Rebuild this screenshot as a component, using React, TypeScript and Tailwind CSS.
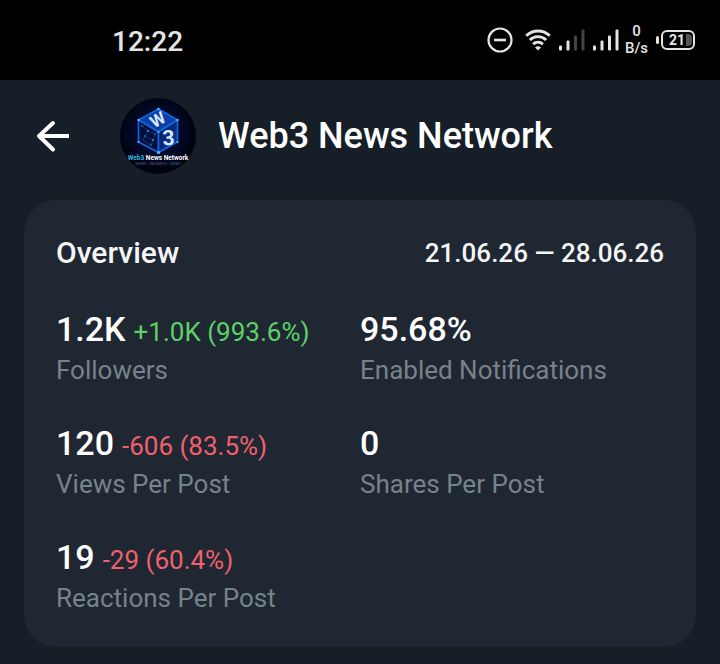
import type { ReactNode } from 'react'

type Stat = {
  label: string
  value: string
  delta?: string
  up?: boolean
}

const stats: Stat[] = [
  { label: 'Followers', value: '1.2K', delta: '+1.0K (993.6%)', up: true },
  { label: 'Enabled Notifications', value: '95.68%' },
  { label: 'Views Per Post', value: '120', delta: '-606 (83.5%)' },
  { label: 'Shares Per Post', value: '0' },
  { label: 'Reactions Per Post', value: '19', delta: '-29 (60.4%)' },
]

export default function App() {
  return (
    <div className="min-h-screen bg-[#161e27] font-['Roboto',sans-serif] text-white">
      <StatusBar />

      <header className="flex h-[120px] items-center pr-6 pb-2 pl-8">
        <button type="button" aria-label="Back" className="flex h-12 w-12 items-center">
          <BackIcon />
        </button>
        <ChannelLogo />
        <h1 className="ml-[22px] truncate text-[36px] leading-[46px] font-medium">Web3 News Network</h1>
      </header>

      <main className="px-6 pb-4">
        <section className="rounded-[32px] bg-[#1e2732] px-8 pt-8 pb-[31px]">
          <div className="flex items-center justify-between leading-[42px] font-medium text-[#f5f5f5]">
            <h2 className="text-[30px]">Overview</h2>
            <span className="text-[26px]">21.06.26 — 28.06.26</span>
          </div>

          <dl className="mt-8 grid grid-cols-2 gap-y-8">
            {stats.map(s => (
              <StatItem key={s.label} label={s.label}>
                <span className="text-[34px] font-medium">{s.value}</span>
                {s.delta && (
                  <span className={`ml-2 text-[26px] leading-9 ${s.up ? 'text-[#5fd067]' : 'text-[#f0616d]'}`}>
                    {s.delta}
                  </span>
                )}
              </StatItem>
            ))}
          </dl>
        </section>
      </main>
    </div>
  )
}

function StatItem({ label, children }: { label: string; children: ReactNode }) {
  return (
    <div className="flex flex-col-reverse whitespace-nowrap">
      <dt className="text-[26px] leading-9 text-[#78828b]">{label}</dt>
      <dd className="flex items-baseline leading-[46px]">{children}</dd>
    </div>
  )
}

function StatusBar() {
  return (
    <div className="flex h-20 items-center justify-between bg-black pr-[25px] pl-28 text-[#e4e4e4]">
      <span className="pt-1 text-[28px] leading-8 font-medium">12:22</span>
      <div className="flex items-center">
        <DoNotDisturbIcon />
        <WifiIcon />
        <SignalIcon bars={2} />
        <SignalIcon bars={4} />
        <div className="mr-2 ml-1.5 flex flex-col items-center text-[15px] leading-[17px] font-medium">
          <span>0</span>
          <span>B/s</span>
        </div>
        <Battery level={21} />
      </div>
    </div>
  )
}

function BackIcon() {
  return (
    <svg width="40" height="40" viewBox="0 0 40 40" fill="none" stroke="white" strokeWidth="4" strokeLinecap="round">
      <path d="M7 20H37" strokeLinecap="butt" />
      <path d="M21 7L7 20L21 33.5" strokeLinejoin="round" />
    </svg>
  )
}

function DoNotDisturbIcon() {
  return (
    <svg width="26" height="26" viewBox="0 0 26 26" fill="none" stroke="currentColor" strokeWidth="2.2">
      <circle cx="13" cy="13" r="11.5" />
      <path d="M7 13H19" strokeWidth="2.6" />
    </svg>
  )
}

function WifiIcon() {
  return (
    <svg className="ml-3" width="26" height="22" viewBox="0 0 26 22" fill="none" stroke="currentColor" strokeWidth="2.9">
      <path d="M1.2 6.8C8 0.4 18 0.4 24.8 6.8" />
      <path d="M4.8 11C9.6 6.5 16.4 6.5 21.2 11" />
      <path d="M8.1 15.2C11 12.6 15 12.6 17.9 15.2" />
      <path d="M10 18.5C11.8 16.8 14.2 16.8 16 18.5L13 21.6Z" fill="currentColor" stroke="none" />
    </svg>
  )
}

function SignalIcon({ bars }: { bars: number }) {
  return (
    <svg className="ml-2" width="26" height="22" viewBox="0 0 26 22">
      {[5, 10, 15, 21].map((h, i) => (
        <rect
          key={h}
          x={i * 7.5}
          y={21.5 - h}
          width="3"
          height={h}
          rx="1"
          fill={i < bars ? '#e4e4e4' : '#444444'}
        />
      ))}
    </svg>
  )
}

function Battery({ level }: { level: number }) {
  return (
    <div className="flex items-center gap-[2px]">
      <span className="h-2 w-[3px] rounded-sm bg-[#e4e4e4]" />
      <span className="flex h-5 w-[34px] items-center justify-end gap-px rounded-md border-2 border-[#e4e4e4] pr-px text-[14px] leading-4 font-bold">
        {level}
        <span className="h-3 w-[6px] rounded-r-sm bg-[#555555]" />
      </span>
    </div>
  )
}

function ChannelLogo() {
  return (
    <svg className="ml-10 shrink-0" width="76" height="76" viewBox="0 0 76 76" role="img" aria-label="Web3 News Network logo">
      <defs>
        <radialGradient id="glow" cx="0.5" cy="0.45" r="0.5">
          <stop offset="0" stopColor="#0a3a9c" />
          <stop offset="0.5" stopColor="#030b30" />
          <stop offset="1" stopColor="#01030f" />
        </radialGradient>
        <linearGradient id="top" x1="0" y1="0" x2="0" y2="1">
          <stop offset="0" stopColor="#0b3fae" />
          <stop offset="1" stopColor="#0c3ea6" />
        </linearGradient>
        <linearGradient id="right" x1="0" y1="0" x2="1" y2="1">
          <stop offset="0" stopColor="#04174f" />
          <stop offset="1" stopColor="#0b3fb0" />
        </linearGradient>
      </defs>
      <circle cx="38" cy="38" r="38" fill="url(#glow)" />
      <g stroke="#1565dc" strokeWidth="1.6" strokeLinejoin="round">
        <path d="M38.5 11L57.5 22L38.5 34L18.5 22Z" fill="url(#top)" />
        <path d="M18.5 22L38.5 34V54.5L18.5 44Z" fill="#03103a" />
        <path d="M57.5 22L38.5 34V54.5L57.5 44Z" fill="url(#right)" />
      </g>
      <path d="M22 28L28 33L25 38L33 42L35 36L28 33M25 38L23 42L31 47L33 42" stroke="#1a58bd" strokeWidth="0.5" fill="none" />
      <g fill="#2f9bf5">
        <circle cx="22" cy="28" r="0.8" />
        <circle cx="28" cy="33" r="0.9" />
        <circle cx="25" cy="38" r="0.8" />
        <circle cx="33" cy="42" r="0.9" />
        <circle cx="35" cy="36" r="0.7" />
        <circle cx="31" cy="47" r="0.7" />
      </g>
      <g fill="#5cb8ff">
        <circle cx="38.5" cy="11" r="1.2" />
        <circle cx="57.5" cy="22" r="1.2" />
        <circle cx="18.5" cy="22" r="1.2" />
        <circle cx="38.5" cy="34" r="1.1" />
        <circle cx="57.5" cy="44" r="1.1" />
        <circle cx="18.5" cy="44" r="1.1" />
        <circle cx="38.5" cy="54.5" r="1.6" />
      </g>
      <g fill="#dbe9ff" fontFamily="Roboto, sans-serif" fontWeight="700" textAnchor="middle">
        <text x="38" y="27.5" fontSize="17" transform="rotate(-30 38 22)">W</text>
        <text x="48.5" y="47" fontSize="21" transform="rotate(-4 48.5 40)">3</text>
      </g>
      <text x="38" y="62" fontSize="6.5" fontFamily="Roboto, sans-serif" fontWeight="700" textAnchor="middle" fill="#ffffff">
        <tspan fill="#35b5e0">Web3</tspan> News Network
      </text>
      <text x="38" y="66.5" fontSize="4" fontFamily="Roboto, sans-serif" textAnchor="middle" fill="#566175">
        NEWS · INSIGHTS · <tspan fill="#216396">WEB3</tspan>
      </text>
    </svg>
  )
}
